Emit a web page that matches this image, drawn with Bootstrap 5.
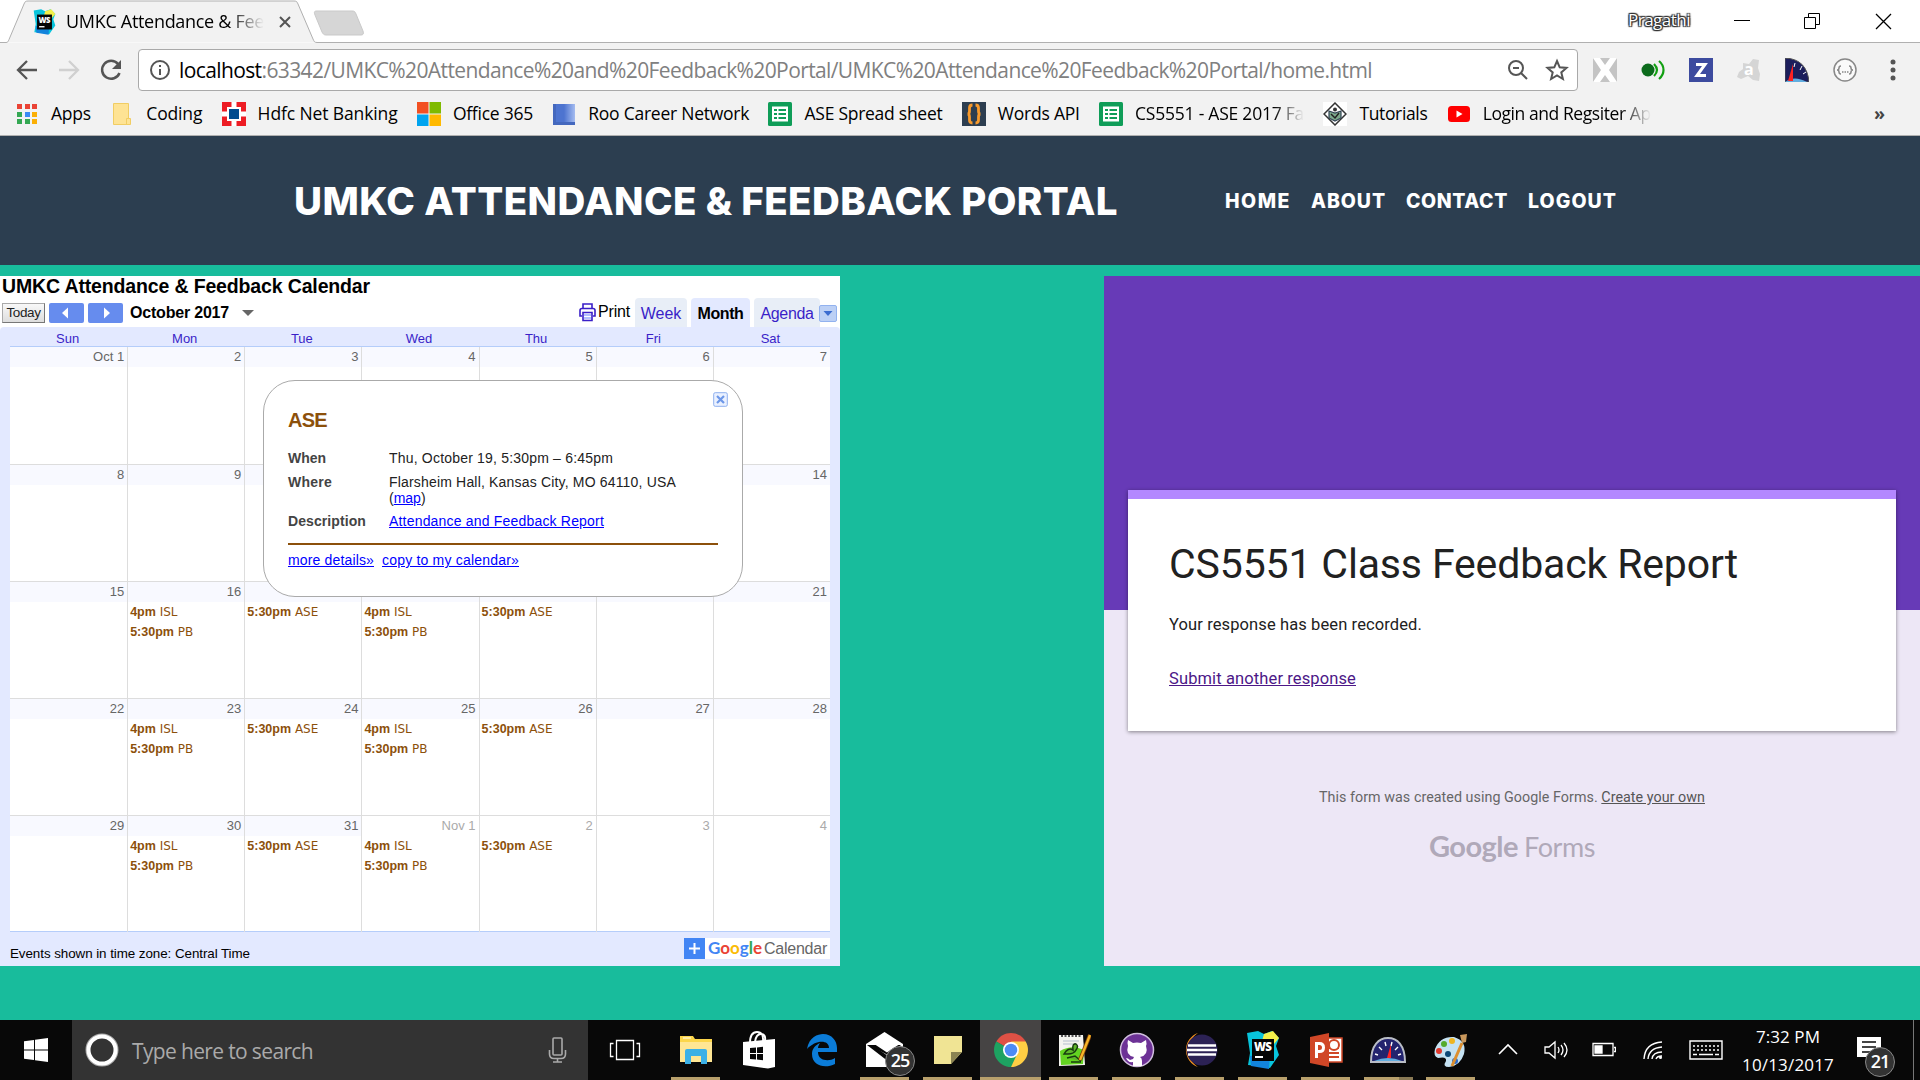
<!DOCTYPE html>
<html lang="en">
<head>
<meta charset="utf-8">
<title>UMKC Attendance &amp; Feedback Portal</title>
<link rel="stylesheet" href="https://cdn.jsdelivr.net/npm/bootstrap@5.3.0/dist/css/bootstrap.min.css">
<style>
body{width:1920px;height:1080px;overflow:hidden;background:#18bc9c;font-family:"Open Sans","Noto Sans",sans-serif;color:#000;line-height:1.2}
svg{display:block;flex:none}
.fit{display:inline-block;white-space:nowrap}
/* browser frame */
.titlebar{height:43px;background:#fff}
.tabbody{padding:2px 0 0 33px;gap:10px;height:42px;top:0;left:0;width:318px}
.tabtitle{width:198px;font-size:18px}
.fade-end{-webkit-mask-image:linear-gradient(90deg,#000 82%,transparent);mask-image:linear-gradient(90deg,#000 82%,transparent)}
.underframe{border-bottom:1px solid #b0b0b0}
.winbtns{padding-right:28px}
.winbtns svg+svg{margin-left:54px}
.owner{font-size:17px;line-height:22px;padding-bottom:2px;color:#fff;text-shadow:0 0 2px #222,1px 1px 1px #333,-1px -1px 1px #333,1px -1px 1px #333,-1px 1px 1px #333;margin-right:44px}
.toolbar{height:49px;background:#f2f2f2;padding:0 15px}
.omni{flex:none;width:1440px;height:42px;margin-left:14px;border:1px solid #a9a9a9;border-radius:4px;background:#fff;padding:0 8px 0 10px;font-size:21px;color:#808080;margin-top:6px}
.url{margin-left:8px;padding-top:2px}
.navicons{gap:18px;width:109px;height:44px;margin-top:5px;flex:none}
.exts{gap:24px;height:44px;padding-left:15px;margin-top:5px;flex:none}
.marks{height:44px;background:#f2f2f2;border-bottom:1px solid #b0b0b0;padding:0 35px 0 15px;font-size:17.5px;gap:19.3px}
.marks>div{gap:12px}
.more-marks{font-size:18px;color:#444}
/* portal */
.portal-head{height:129px;background:#2c3e50;color:#fff;font-family:Inter,sans-serif;font-weight:800;padding:2px 303px 0 294px}
.portal-title{font-size:38.5px}
.portal-nav{font-size:19.5px;gap:20px}
.portal-nav a{color:#fff;text-decoration:none}
.stage{height:755px;padding-top:11px}
/* calendar */
.cal{width:840px;height:690px;background:#fff;font-family:"Liberation Sans",Arial,sans-serif}
.caltitle{font-size:19.5px;font-weight:bold;height:22px;line-height:21px;padding-left:2px}
.calnav{height:29px;padding-left:2px}
.navleft{height:29px}
.todaybtn{width:43px;height:20px;border:1px solid #888;border-color:#aaa #777 #777 #aaa;background:linear-gradient(#f8f8f8,#ddd);font-size:13.5px;color:#222;line-height:17px;text-align:center}
.arrowbtn{width:35px;height:20px;background:#668cee;border-radius:2px}
.monthname{font-size:16px;font-weight:bold;margin:0 13px 0 7px}
.printlink{font-size:16px;line-height:27px;margin:0 5px 0 1px}
.caltab{height:29px;background:#e8eef7;border-radius:4px 4px 0 0;color:#3a1fc8;font-size:16px;line-height:31px;text-align:center}
.caltab.on{background:#e3e9ff;color:#000;font-weight:bold}
.dropbtn{width:18px;height:17px;background:#bcd0f5;border:1px solid #92b2ef;border-radius:2px;margin:7px 3px 0 -1px}
.calbody{background:#e3e9ff;height:639px;padding:0 10px;border-radius:4px 4px 0 0}
.daynames{height:20px;font-size:13px;line-height:23px;color:#3a1fc8;border-bottom:1px solid #b5cdfa}
.daynames div{position:relative;left:-1px}
.weeks{height:585px;background:#fff;border-bottom:1px solid #b5cdfa}
.week{border-top:1px solid #ddd;height:117px;flex:none}
.week:first-child{border-top:0}
.day{flex:none;width:14.2857%;border-left:1px solid #ddd}
.day:first-child{border-left:0}
.dnum{height:20px;background:#f8f9ff;color:#666;font-size:13px;line-height:19px;text-align:right;padding-right:3px}
.next .dnum{background:#fff;color:#aaa}
.ev{font-size:12px;line-height:20px;height:20px;color:#8c500b;padding-left:2px;font-family:"DejaVu Sans",Verdana,sans-serif;white-space:nowrap}
.ev b{font-family:"Liberation Sans",sans-serif;font-size:12.5px}
.calfoot{font-size:13.4px;padding-top:6px}
.zone{padding-top:8px}
.gcal{background:#fff;height:21px;width:146px;font-size:16px;color:#666}
.gcal b{font-family:Lato,sans-serif;font-size:17px;margin:0 2px 0 3px}
.plus{width:21px;height:21px;background:#4285f4}
.bubble{left:263px;top:104px;width:480px;height:217px;background:#fff;border:1px solid #aaa;border-radius:32px;padding:27px 24px 0;font-size:14px;line-height:16px;color:#222}
.bubble h5{font-size:20px;font-weight:bold;color:#8c500b;line-height:24px;margin:0 0 18px}
.bubble dt{width:101px;color:#444}
.bubble dl>div{margin-bottom:7.5px}
.bubble dd,.bubble dl{margin:0}
.bubble a{color:#00f}
.bubble .rule{height:2px;background:#8c500b;margin:14px 0 7px}
.closex{right:14px;top:11px}
/* form */
.gform{width:816px;height:690px;font-family:Roboto,sans-serif;background:linear-gradient(#673ab7 334px,#ede7f6 334px);padding:214px 24px 0}
.fcard{height:241px;background:#fff;border-top:9px solid #b388ff;border-radius:0;box-shadow:0 1px 4px rgba(0,0,0,.45);padding:41px 41px 0;color:#212121}
.fcard h1{font-size:41px;line-height:48px;margin:0;font-weight:400}
.fcard p{font-size:16.5px;line-height:20px;margin:27px 0 34px}
.fcard a{font-size:16.5px;line-height:20px;color:#4c1787}
.fnote{font-size:14.3px;color:#666;margin-top:57px;line-height:18px}
.fnote a{color:#555}
.flogo{font-size:27px;color:#b0a9b9;margin-top:22px;line-height:36px;gap:6px;font-family:Lato,sans-serif}
.flogo b{font-size:29px;font-weight:700}
/* taskbar */
.taskbar{height:60px;background:#080808;color:#fff}
.start{width:72px}
.search{width:516px;background:#333;color:#aaa;font-size:21px;padding:0 21px 0 13px}
.searchtext{margin-left:13px;padding-top:4px}
.tview{width:76px;padding-right:3px}
.task{width:63px;height:60px;flex:none}
.task.narrow{width:62px}
.task.run::after{content:"";position:absolute;bottom:0;left:7px;width:49px;height:3px;background:#b8a06c}
.task.active{background:linear-gradient(#464444,#464444) 1px 0/61px 60px no-repeat}
.task.active::after{left:1px;width:61px}
.task.multi::before{content:"";position:absolute;z-index:2;bottom:0;left:42px;width:14px;height:3px;background:#8a7a55}
.cnt{width:30px;height:30px;border-radius:50%;background:#333;border:1px solid #888;font-size:18px;font-weight:600;text-align:center;line-height:27px;left:32px;top:26px;letter-spacing:-1px}
.tray{width:439px}
.clock{font-size:17px;line-height:28px;width:94px;flex:none;margin:2px 22px 0 18px}
.alert-box{width:40px;height:60px}
.alert-box .cnt{left:8px;top:27px}
.edgeline{width:1px;height:60px;background:#777;margin-right:6px}
</style>
<script src="https://cdn.jsdelivr.net/npm/bootstrap@5.3.0/dist/js/bootstrap.bundle.min.js"></script>
</head>
<body class="d-flex flex-column">
<svg width="0" height="0" class="position-absolute"><defs>
<symbol id="ws" viewBox="0 0 34 38"><path d="M1 2l11-2 6 3 8-3 7 7-3 8 3 9-9 13-12-2-10-1 2-12z" fill="#08c4dc"/><path d="M18 3l9-3 6 7-5 6-12-3z" fill="#f4f04a"/><path d="M4 25l20-1-1 14-18-3z" fill="#1284dc"/><rect x="6" y="8" width="22" height="22" fill="#050505"/><text x="8" y="20" font-family="Open Sans" font-size="11.5" font-weight="800" fill="#fff" textLength="18">WS</text><path d="M9 26h8" stroke="#fff" stroke-width="2"/></symbol>
<symbol id="sheet" viewBox="0 0 24 24"><rect width="24" height="24" rx="1.5" fill="#0f9d58"/><path d="M4 4.500h16v15H4z" fill="#fff"/><path d="M6 7h3v2H6zm4.500 0H18v2h-7.500zM6 11h3v2H6zm4.500 0H18v2h-7.500zM6 15h3v2H6zm4.500 0H18v2h-7.500z" fill="#0f9d58"/></symbol>
</defs></svg>

<header>
<div class="titlebar d-flex justify-content-between position-relative">
  <svg width="370" height="43"><path d="M0 42.500H6c2 0 2-1 3-3L24 4c1-2 1-3 4-3h266c3 0 3 1 4 3l15 35c1 2 1 3.500 4 3.500h53" fill="#f2f2f2" stroke="#b0b0b0"/><path d="M317 11h35c3 0 3 1 4 3l7 17c1 3 0 4-2 4h-35c-2 0-3-1-4-3l-7-17c-1-3-1-4 2-4z" fill="#d6d6d6" stroke="#c9c9c9"/></svg>
  <div class="tabbody position-absolute d-flex align-items-center">
    <svg width="23" height="26"><use href="#ws"/></svg>
    <div class="tabtitle fade-end"><span class="fit" data-w="198">UMKC Attendance &amp; Fee</span></div>
    <svg class="ms-1" width="14" height="14" stroke="#555" stroke-width="2"><path d="M2 2l10 10M12 2L2 12"/></svg>
  </div>
  <div class="flex-grow-1 underframe"></div>
  <div class="winbtns underframe d-flex align-items-center">
    <span class="owner fit" data-w="62">Pragathi</span>
    <svg width="16" height="16"><path d="M0 7.500h16" stroke="#000"/></svg>
    <svg width="17" height="17" fill="none" stroke="#000"><path d="M.5 4.500h11v11H.500zM4.500 4.500v-4h11v11h-4"/></svg>
    <svg width="17" height="17" stroke="#000" stroke-width="1.300"><path d="M1 1l15 15M16 1L1 16"/></svg>
  </div>
</div>
<div class="toolbar d-flex align-items-start">
  <div class="navicons d-flex align-items-center">
    <svg width="24" height="22" fill="none" stroke="#555" stroke-width="2.300"><path d="M22 11H3M12 2l-9 9 9 9"/></svg>
    <svg width="24" height="22" fill="none" stroke="#d0d0d0" stroke-width="2.300"><path d="M2 11h19M12 2l9 9-9 9"/></svg>
    <svg width="24" height="24" fill="none" stroke="#555" stroke-width="2.500"><path d="M19 6A9 9 0 1 0 20.500 15"/><path d="M22 2v9h-9z" fill="#555" stroke="none"/></svg>
  </div>
  <div class="omni d-flex align-items-center">
    <svg width="22" height="22" fill="none" stroke="#555" stroke-width="2"><circle cx="11" cy="11" r="9"/><path d="M11 10v6M11 6v2"/></svg>
    <span class="fit url" data-w="1193"><span class="text-black">localhost</span>:63342/UMKC%20Attendance%20and%20Feedback%20Portal/UMKC%20Attendance%20Feedback%20Portal/home.html</span>
    <svg class="ms-auto" width="22" height="22" fill="none" stroke="#555" stroke-width="2"><circle cx="9" cy="9" r="7"/><path d="M14 14l6 6M6 9h6"/></svg>
    <svg class="ms-3" width="24" height="24" fill="none" stroke="#555" stroke-width="2"><path d="M12 3l2.700 6.300 6.800.6-5.200 4.500 1.600 6.600-5.900-3.500L6.100 21l1.600-6.600L2.500 9.900l6.800-.6z"/></svg>
  </div>
  <div class="exts d-flex align-items-center">
    <svg width="24" height="24"><path fill="#c4c4c4" d="M0 0h24v24H0z"/><path fill="#fff" d="M0 0h7l5 7 5-7h7l-8 12 8 12h-7l-5-7-5 7H0l8-12z"/></svg>
    <svg width="24" height="24" fill="none" stroke="#12a012" stroke-width="2.200"><circle cx="7" cy="12" r="6.500" fill="#0c6b1c" stroke="none"/><path d="M13 6c4 4 4 8 0 12M18 3c6 5 6 13 0 18"/></svg>
    <svg width="24" height="24"><path fill="#3d4b9f" d="M0 0h24v24H0z"/><path d="M7 6.500h9L8 17.500h9" fill="none" stroke="#fff" stroke-width="3"/></svg>
    <svg width="24" height="24" fill="#d5d5d5"><path d="M6 5l6 1 4-5 6 1-1 8 2 6-1 7-6-1-5-4-7 3-4-2 2-5 4-3z"/><text x="7" y="17" font-family="Open Sans" font-size="16" font-weight="700" fill="#fff">a</text></svg>
    <svg width="24" height="24"><path d="M0 0Q22 1 24 24H0z" fill="#1c1e5c" stroke="#555"/><path d="M0 24q9-7 22 0z" fill="#62aee0"/><path d="M3 23L8 6v17z" fill="#f22"/><path d="M10 5l-1 4M17 8l-2 4M21 14l-3 2" stroke="#fff"/></svg>
    <svg width="24" height="24" fill="none" stroke="#888" stroke-width="1.500"><circle cx="12" cy="12" r="11" fill="#fafafa"/><path d="M8 8q-2 0-2 2t-2 2q2 0 2 2t2 2M16 8q2 0 2 2t2 2q-2 0-2 2t-2 2M9 14h1.500m1 0h1.500m1 0h1.500"/></svg>
    <svg width="24" height="24" fill="#555"><circle cx="12" cy="4" r="2.500"/><circle cx="12" cy="12" r="2.500"/><circle cx="12" cy="20" r="2.500"/></svg>
  </div>
</div>
<div class="marks d-flex align-items-center">
  <div class="d-flex align-items-center"><svg width="24" height="24"><g fill="#ea4335"><path d="M2 2h5v5H2zM10 2h5v5h-5zM17 2h5v5h-5z"/></g><path d="M2 10h5v5H2zM2 17h5v5H2zM10 17h5v5h-5z" fill="#34a853"/><path d="M10 10h5v5h-5z" fill="#3a8af4"/><path d="M17 10h5v5h-5zM17 17h5v5h-5z" fill="#fbaf05"/></svg><span class="fit" data-w="40">Apps</span></div>
  <div class="d-flex align-items-center"><svg width="24" height="24"><path d="M3.500 1.500h15v21h-15z" fill="#fee394" stroke="#f1cd63"/><path d="M16.500 16.500h4v6h-4z" fill="#fee394" stroke="#f1cd63"/></svg><span class="fit" data-w="56">Coding</span></div>
  <div class="d-flex align-items-center"><svg width="24" height="24"><path d="M0 0h24v24H0z" fill="#ed1c24"/><path d="M9.500 0h5v5H19v4.500h5v5h-5V19h-4.500v5h-5v-5H5v-4.500H0v-5h5V5h4.500z" fill="#fff"/><path d="M7 7h10v10H7z" fill="#004c8f"/></svg><span class="fit" data-w="140">Hdfc Net Banking</span></div>
  <div class="d-flex align-items-center"><svg width="24" height="24"><path d="M0 0h11.500v11.500H0z" fill="#f25022"/><path d="M12.500 0H24v11.500H12.500z" fill="#7fba00"/><path d="M0 12.500h11.500V24H0z" fill="#00a4ef"/><path d="M12.500 12.500H24V24H12.500z" fill="#ffb900"/></svg><span class="fit" data-w="80">Office 365</span></div>
  <div class="d-flex align-items-center"><svg width="24" height="24"><defs><linearGradient id="roo"><stop offset=".5" stop-color="#4d74d0"/><stop offset="1" stop-color="#a5bcf0"/></linearGradient></defs><path d="M1 2h22v21H1z" fill="url(#roo)"/><path d="M1 2h3v21H1zM4 20h19v3H4z" fill="#4468be"/></svg><span class="fit" data-w="161">Roo Career Network</span></div>
  <div class="d-flex align-items-center"><svg width="24" height="24"><use href="#sheet"/></svg><span class="fit" data-w="138">ASE Spread sheet</span></div>
  <div class="d-flex align-items-center"><svg width="24" height="24"><path d="M0 0h24v24H0z" fill="#2d3e50"/><path d="M10.500 3Q7.500 3 7.500 6v3q0 3-2 3 2 0 2 3v3q0 3 3 3M13.500 3q3 0 3 3v3q0 3 2 3-2 0-2 3v3q0 3-3 3" fill="none" stroke="#f89a2c" stroke-width="2.800"/></svg><span class="fit" data-w="82">Words API</span></div>
  <div class="d-flex align-items-center"><svg width="24" height="24"><use href="#sheet"/></svg><span class="fit fade-end" data-w="169">CS5551 - ASE 2017 Fa</span></div>
  <div class="d-flex align-items-center"><svg width="24" height="24"><path fill="#fff" d="M0 0h24v24H0z"/><path d="M12 1l11 11-11 11L1 12z" fill="#fff" stroke="#333" stroke-width="1.500"/><path d="M6 9l6 2 6-2v7l-6 3-6-3z" fill="#7ca98b" stroke="#345" stroke-width="1.200"/><circle cx="12" cy="7.500" r="2" fill="#333"/><path d="M8 12l4 4 4-5" fill="none" stroke="#222" stroke-width="1.500"/></svg><span class="fit" data-w="68">Tutorials</span></div>
  <div class="d-flex align-items-center"><svg width="24" height="24"><rect x="1" y="4" width="22" height="16" rx="3.500" fill="#f00"/><path d="M9.500 8.500v7l6-3.500z" fill="#fff"/></svg><span class="fit fade-end" data-w="168">Login and Regsiter Ap</span></div>
  <b class="ms-auto more-marks">»</b>
</div>
</header>

<nav class="portal-head d-flex align-items-center justify-content-between">
  <span class="portal-title fit" data-w="824">UMKC ATTENDANCE &amp; FEEDBACK PORTAL</span>
  <div class="portal-nav d-flex"><a href="#" class="fit" data-w="66">HOME</a><a href="#" class="fit" data-w="75">ABOUT</a><a href="#" class="fit" data-w="102">CONTACT</a><a href="#" class="fit" data-w="89">LOGOUT</a></div>
</nav>

<main class="stage d-flex justify-content-between">
<section class="cal position-relative">
  <div class="caltitle"><span class="fit" data-w="368">UMKC Attendance &amp; Feedback Calendar</span></div>
  <div class="calnav d-flex">
    <div class="navleft d-flex align-items-center">
      <div class="todaybtn"><span class="fit" data-w="34">Today</span></div>
      <div class="arrowbtn ms-1"><svg width="35" height="20" fill="#fff"><path d="M19 4.500v11l-6-5.500z"/></svg></div>
      <div class="arrowbtn ms-1"><svg width="35" height="20" fill="#fff"><path d="M16 4.500v11l6-5.500z"/></svg></div>
      <span class="monthname fit" data-w="99">October 2017</span>
      <svg width="12" height="7"><path d="M0 1h12L6 7z" fill="#666"/></svg>
    </div>
    <div class="d-flex ms-auto">
      <svg class="mt-1" width="19" height="21" fill="none" stroke="#3a1fc8" stroke-width="1.600"><path d="M5 7V2h9v5M4 14H2V8.500q0-2 2-2h11q2 0 2 2V14h-2"/><path d="M5 10.500h9v8H5z" fill="#fff"/><path d="M6 13h7M6 16h7" stroke="#9af"/></svg>
      <span class="fit printlink" data-w="32">Print</span>
      <div class="caltab" style="width:52px">Week</div>
      <div class="caltab on mx-1" style="width:59px"><span class="fit" data-w="46">Month</span></div>
      <div class="caltab" style="width:66px"><span class="fit" data-w="53">Agenda</span></div>
      <div class="dropbtn"><svg width="16" height="15"><path d="M3.500 5h9L8 10z" fill="#3a6bd0"/></svg></div>
    </div>
  </div>
  <div class="calbody">
    <div class="daynames d-flex text-center"><div class="col">Sun</div><div class="col">Mon</div><div class="col">Tue</div><div class="col">Wed</div><div class="col">Thu</div><div class="col">Fri</div><div class="col">Sat</div></div>
    <div class="weeks" id="weeks"></div>
    <div class="calfoot d-flex justify-content-between">
      <span class="fit zone" data-w="240">Events shown in time zone: Central Time</span>
      <div class="gcal d-flex align-items-center"><svg class="plus" width="21" height="21"><path d="M10.500 5v11M5 10.500h11" stroke="#fff" stroke-width="2"/></svg>
        <b class="fit" data-w="54"><span style="color:#4285f4">G</span><span style="color:#ea4335">o</span><span style="color:#fbbc05">o</span><span style="color:#4285f4">g</span><span style="color:#34a853">l</span><span style="color:#ea4335">e</span></b><span class="fit" data-w="63">Calendar</span></div>
    </div>
  </div>
  <div class="bubble position-absolute">
    <svg class="closex position-absolute" width="15" height="15" fill="none"><rect x=".7" y=".7" width="13.600" height="13.600" rx="1.500" stroke="#8fb0ee" fill="#eaf1ff"/><path d="M4 4l7 7M11 4l-7 7" stroke="#6d97e8" stroke-width="2.200"/></svg>
    <h5><span class="fit" data-w="39">ASE</span></h5>
    <dl>
      <div class="d-flex"><dt><span class="fit" data-w="38">When</span></dt><dd><span class="fit" data-w="224">Thu, October 19, 5:30pm – 6:45pm</span></dd></div>
      <div class="d-flex"><dt><span class="fit" data-w="44">Where</span></dt><dd><span class="fit" data-w="287">Flarsheim Hall, Kansas City, MO 64110, USA</span><br>(<a href="#">map</a>)</dd></div>
      <div class="d-flex"><dt><span class="fit" data-w="78">Description</span></dt><dd><a href="#" class="fit" data-w="215">Attendance and Feedback Report</a></dd></div>
    </dl>
    <div class="rule"></div>
    <a href="#" class="fit" data-w="86">more details»</a><a href="#" class="fit ms-2" data-w="137">copy to my calendar»</a>
  </div>
</section>

<section class="gform">
  <div class="card fcard border-start-0 border-end-0 border-bottom-0 d-block">
    <h1><span class="fit" data-w="569">CS5551 Class Feedback Report</span></h1>
    <p><span class="fit" data-w="253">Your response has been recorded.</span></p>
    <a href="#" class="fit" data-w="187">Submit another response</a>
  </div>
  <div class="fnote text-center"><span class="fit" data-w="386">This form was created using Google Forms. <a href="#">Create your own</a></span></div>
  <div class="flogo d-flex justify-content-center align-items-baseline"><b class="fit" data-w="89">Google</b><span class="fit" data-w="71">Forms</span></div>
</section>
</main>

<footer class="taskbar d-flex align-items-center">
  <div class="start d-flex justify-content-center"><svg width="24" height="24" fill="#fff"><path d="M0 3.300l10-1.400v9.600H0zM11 1.700L24 0v11.500H11zM0 12.500h10v9.500L0 20.700zM11 12.500h13V24l-13-1.800z"/></svg></div>
  <div class="search d-flex align-items-center h-100">
    <svg width="34" height="34" fill="none"><circle cx="17" cy="17" r="15.500" stroke="#aaa" stroke-width="2"/><circle cx="17" cy="17" r="13.500" stroke="#fff" stroke-width="4"/></svg>
    <span class="fit searchtext" data-w="181">Type here to search</span>
    <svg class="ms-auto" width="19" height="26" fill="none" stroke="#aaa" stroke-width="1.600"><rect x="5" y="1" width="9" height="17" rx="1"/><path d="M1.500 13v4q0 4.500 4.500 4.500h7q4.500 0 4.500-4.500v-4M9.500 22v3M5 25h9"/></svg>
  </div>
  <div class="tview d-flex justify-content-center"><svg width="32" height="22" fill="none" stroke="#fff" stroke-width="1.300"><path d="M7.500 1.500h17v19h-17zM4.500 4.500h-3v13h3M27.500 4.500h3v13h-3"/></svg></div>
  <div class="task run position-relative d-flex align-items-center justify-content-center"><svg width="32" height="28"><path d="M0 0h13l2 3h17v23H0z" fill="#fcd64b"/><path d="M0 6h32v20H0z" fill="#ffe694"/><path d="M5 28V15q0-2 2-2h18q2 0 2 2v13h-6v-8H11v8z" fill="#3cb0e6"/><path d="M3 2h8" stroke="#fff"/></svg></div>
  <div class="task position-relative d-flex align-items-center justify-content-center"><svg width="34" height="38"><path d="M8 12Q8 1 15 1t6 10M13 11Q14 3 19 3t4 7" fill="none" stroke="#fff" stroke-width="2"/><path d="M1 11l32-3v28l-7 1.500L1 34z" fill="#fff"/><path d="M8 17l6-.5V22H8zm7-.6l6-.6V22h-6zM8 23h6v5.500l-6-.5zm7 0h6v6.300l-6-.7z" fill="#080808"/></svg></div>
  <div class="task position-relative d-flex align-items-center justify-content-center"><svg width="32" height="34"><path d="M1 16C3 4 12 1 17 1c9 0 14 7 14 14v4H12c0 9 11 10 17 6v6c-10 5-23 2-23-10 0-6 4-9 8-11-1 2-2 3-2 5h11c0-9-14-8-22 1z" fill="#0b7cd8"/></svg></div>
  <div class="task run position-relative d-flex align-items-center justify-content-center"><svg width="37" height="36"><path d="M0 12L18.500 0 37 12v23H0z" fill="#fff"/><path d="M2 13h33l-11 9 2 3L2 13z" fill="#080808"/><path d="M9 12.500h24l-12 8z" fill="#fff"/><path d="M1 13l22 17-1-6L6 13z" fill="#080808"/></svg><span class="cnt position-absolute">25</span></div>
  <div class="task run position-relative d-flex align-items-center justify-content-center"><svg width="28" height="28"><path d="M0 0h28v16L17 28H0z" fill="#f0e494"/><path d="M28 16H17v12z" fill="#8a8352"/></svg></div>
  <div class="task run active position-relative d-flex align-items-center justify-content-center"><svg width="34" height="34" viewBox="0 0 34 34"><path d="M17 17L2.300 8.500A17 17 0 0 1 31.700 8.500z" fill="#de5145"/><path d="M2.300 8.500A17 17 0 0 0 17 34l8-13-8-4z" fill="#1da261"/><path d="M31.700 8.500A17 17 0 0 1 17 34l8-17-8-8.500z" fill="#ffce44"/><circle cx="17" cy="17" r="8" fill="#fff"/><circle cx="17" cy="17" r="6.300" fill="#4d8bf5"/></svg></div>
  <div class="task run position-relative d-flex align-items-center justify-content-center"><svg width="34" height="36"><path d="M2 3h24l2 30-26 1z" fill="#f4f4ef"/><path d="M3 19q12-7 24-1l-1 14-22 1z" fill="#63d321"/><path d="M4 4h20" stroke="#555" stroke-width="2" stroke-dasharray="2 1.500"/><path d="M6 9h16M6 12h10" stroke="#b5bfcc"/><path d="M7 22q4-7 9-4-1-7 3-6 3 2 0 6-2 4-8 4zM10 26l8-2 6 5M14 30h10" fill="#5fb62b" stroke="#173b10" stroke-width="1.500"/><path d="M33 3L23 28" stroke="#7d3f09" stroke-width="4"/><path d="M33 3L23 28" stroke="#f7b528" stroke-width="2.400"/></svg></div>
  <div class="task run position-relative d-flex align-items-center justify-content-center"><svg width="36" height="36"><circle cx="18" cy="18" r="16.500" fill="#6d3296" stroke="#d0bfdd" stroke-width="1.500"/><path d="M9 8l5 3q4-1 8 0l5-3q1 4 0 6 3 9-6 11 2 1 2 4v5H14v-4q-5 1-7-4 2 0 4 2l3-1 1-2q-9-2-6-11-1-3 0-6z" fill="#fff"/></svg></div>
  <div class="task run position-relative d-flex align-items-center justify-content-center"><svg width="36" height="36"><path d="M16 1A18 18 0 0 0 16 35 20 20 0 0 1 16 1z" fill="#f7941e"/><circle cx="20" cy="18" r="15.500" fill="#2c2255"/><path d="M6 13.500h28M5 18h30M6 22.500h28" stroke="#fff" stroke-width="2.500"/></svg></div>
  <div class="task run position-relative d-flex align-items-center justify-content-center"><svg width="36" height="38"><use href="#ws"/></svg></div>
  <div class="task run position-relative d-flex align-items-center justify-content-center"><svg width="34" height="34"><path d="M15 5h18v24H15z" fill="#fff" stroke="#d04727" stroke-width="1.500"/><path d="M20 15h10M20 20h10M20 24h10" stroke="#d04727" stroke-width="2"/><circle cx="25" cy="12" r="5" fill="#fff" stroke="#d04727" stroke-width="2"/><path d="M1 4l19-4v34L1 30z" fill="#d04727"/><path d="M7.500 25V10.500h3q4 0 4 4t-4 4h-3" fill="none" stroke="#fff" stroke-width="3"/></svg></div>
  <div class="task narrow run multi position-relative d-flex align-items-center justify-content-center"><svg width="36" height="26"><path d="M1 25C1 8 9 1 18 1s17 7 17 24z" fill="#23246e" stroke="#b9bdc6" stroke-width="2"/><path d="M4 24q14-6 28 0z" fill="#62aee0"/><path d="M5 17l3 1M9 10l3 3M15 5l1 4M22 5l-1 4M28 10l-3 3M31 17l-3 1" stroke="#fff" stroke-width="1.400"/><path d="M17 21L21 7l0 14z" fill="#f22"/></svg></div>
  <div class="task narrow run position-relative d-flex align-items-center justify-content-center"><svg width="36" height="36"><path d="M3 17Q8 4 22 5q13 4 10 17-4 12-15 13-7 0-3-6 1-5-8-3-5-2-3-9z" fill="#c5e2f2"/><circle cx="7" cy="19" r="3" fill="#e0392d"/><circle cx="12" cy="12" r="3" fill="#55ab2c"/><circle cx="20" cy="9" r="3" fill="#efb51f"/><circle cx="16" cy="22" r="3" fill="#0b4775"/><circle cx="23" cy="29" r="3" fill="#2a69c8"/><path d="M20 34L30 11" stroke="#dc8f2f" stroke-width="3"/><path d="M30 11l-2-8 7-1-1 8z" fill="#c9985c"/></svg></div>
  <div class="tray d-flex align-items-center">
    <svg style="margin-left:17px" width="20" height="20" fill="none" stroke="#fff" stroke-width="1.600"><path d="M1 14l9-9 9 9"/></svg>
    <svg style="margin-left:26px" width="24" height="20" fill="none" stroke="#fff" stroke-width="1.300"><path d="M1 7h4l6-5v16l-6-5H1zM14 7q2 3 0 6M17 5q4 5 0 10M20 3q6 7 0 14"/></svg>
    <svg class="ms-4" width="24" height="16" fill="none" stroke="#fff" stroke-width="1.300"><path d="M1 1.500h20v12H1zM22 5.500h1.500v4H22"/><path d="M3 4h7v7H3z" fill="#fff"/></svg>
    <svg style="margin-left:27px" width="21" height="20" fill="none" stroke="#fff" stroke-width="1.400"><path d="M1 19Q2 3 19 2M5 19Q6 8 19 7M9 19q1-7 10-7M13 19q1-3 6-3"/><circle cx="17.500" cy="17.500" r="1.500" fill="#fff" stroke="none"/></svg>
    <svg style="margin-left:25px" width="34" height="20" fill="none" stroke="#fff" stroke-width="1.400"><path d="M1 1h32v18H1z"/><path d="M4 6h26M4 10h26" stroke-dasharray="2 2"/><path d="M4 14.500h4m2 0h14m2 0h4"/></svg>
    <div class="clock text-center d-flex flex-column align-items-center"><span class="fit" data-w="64">7:32 PM</span><span class="fit" data-w="92">10/13/2017</span></div>
    <div class="alert-box position-relative d-flex align-items-center"><svg width="25" height="26"><path d="M0 0h24v20h-8v6l-5-6H0z" fill="#fff"/><path d="M5 5h14M5 10h14M5 15h14" stroke="#080808" stroke-width="1.500"/></svg><span class="cnt position-absolute">21</span></div>
    <div class="edgeline ms-auto"></div>
  </div>
</footer>

<script>
// Month grid: day labels per week; the last four cells belong to November.
const weeks=[['Oct 1',2,3,4,5,6,7],[8,9,10,11,12,13,14],[15,16,17,18,19,20,21],[22,23,24,25,26,27,28],[29,30,31,'Nov 1',2,3,4]];
const monWed='<div class="ev"><b>4pm</b> ISL</div><div class="ev"><b>5:30pm</b> PB</div>', tueThu='<div class="ev"><b>5:30pm</b> ASE</div>';
const events=['',monWed,tueThu,monWed,tueThu,'',''];
// The event bubble covers these days, so their labels are left out.
const covered=[10,11,12,13,17,18,19,20];
document.getElementById('weeks').innerHTML=weeks.map((w,r)=>'<div class="week d-flex">'+w.map((d,c)=>
  `<div class="day${r===4&&c>2?' next':''}"><div class="dnum">${covered.includes(d)?'':d}</div>${r>1?events[c]:''}</div>`).join('')+'</div>').join('');
// Tracks each label so that it fills its data-w width.
document.fonts.ready.then(()=>document.querySelectorAll('.fit').forEach(e=>{
  const n=e.textContent.length;
  e.style.letterSpacing=((e.dataset.w-e.getBoundingClientRect().width)/n)+'px';
}));
</script>
</body>
</html>
